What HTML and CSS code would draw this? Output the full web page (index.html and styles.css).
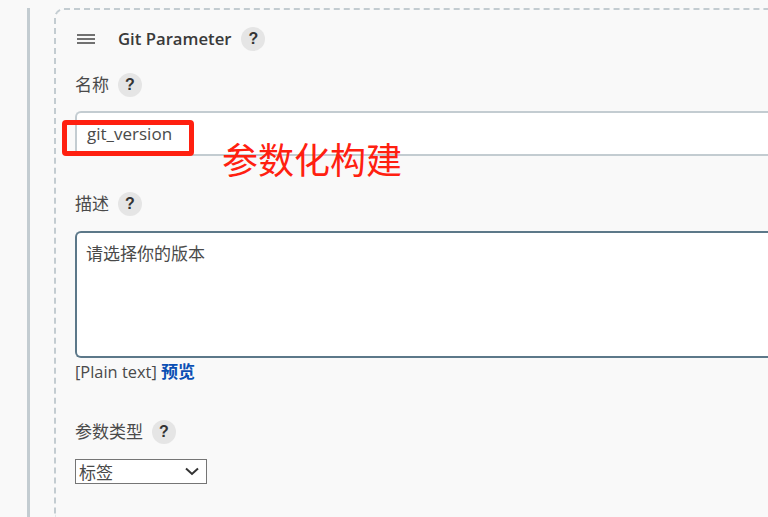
FILE: index.html
```html
<!DOCTYPE html>
<html lang="zh">
<head>
<meta charset="utf-8">
<title>Git Parameter</title>
<link rel="stylesheet" href="styles.css">
</head>
<body>
<div class="section">
  <div class="card">
    <div class="card-head">
      <svg class="handle" width="18" height="10" viewBox="0 0 18 10"><path d="M0 1h18M0 5h18M0 9h18" stroke="#444" stroke-width="1.4" fill="none"/></svg>
      <span class="card-title">Git Parameter</span>
      <span class="help">?</span>
    </div>
    <div class="label-row name-label"><span>名称</span><span class="help">?</span></div>
    <div class="text-input">git_version</div>
    <div class="label-row desc-label"><span>描述</span><span class="help">?</span></div>
    <div class="text-area">请选择你的版本</div>
    <div class="format">[Plain text] <a class="preview">预览</a></div>
    <div class="label-row type-label"><span>参数类型</span><span class="help">?</span></div>
    <div class="select">
      <span>标签</span>
      <svg width="16" height="9" viewBox="0 0 16 9"><path d="M2 1.5l6 5.5 6-5.5" stroke="#333" stroke-width="2" fill="none"/></svg>
    </div>
  </div>
</div>
<div class="highlight"></div>
<div class="annotation">参数化构建</div>
</body>
</html>
```

FILE: styles.css
```css
html, body {
  margin: 0;
  height: 100%;
  overflow: hidden;
  background: #f9f9f9;
}
body {
  font-family: "Open Sans", "Noto Sans CJK SC", sans-serif;
  font-size: 17px;
  color: #4a4a4a;
}
.section {
  box-sizing: border-box;
  height: calc(100% - 8px);
  margin: 8px 0 0 27px;
  padding-left: 24px;
  border-left: 3px solid #c3ccd1;
}
.card {
  box-sizing: border-box;
  height: 100%;
  border: 2px dashed #c3ccd1;
  border-width: 2px 0 0 2px;
  border-top-left-radius: 10px;
  padding: 16px 0 0 19px;
}
.card-head {
  display: flex;
  align-items: center;
  height: 26px;
  padding-left: 2px;
}
.handle { margin-right: 23px; }
.card-title {
  font-size: 16.7px;
  font-weight: 600;
  margin-right: 10px;
  color: #3a3a3a;
  line-height: 26px;
}
.help {
  display: inline-flex;
  align-items: center;
  justify-content: center;
  width: 24px;
  height: 24px;
  border-radius: 50%;
  background: #e5e5e5;
  font-family: "Liberation Sans", sans-serif;
  font-size: 16px;
  font-weight: 700;
  color: #333;
}
.label-row {
  display: flex;
  align-items: center;
  gap: 9px;
  height: 24px;
  line-height: 24px;
}
.name-label { margin-top: 21px; }
.text-input {
  box-sizing: border-box;
  height: 45px;
  margin-top: 14px;
  padding: 9px 0 0 10px;
  background: #fff;
  border: 2px solid #c3ccd1;
  border-right: 0;
  border-radius: 6px 0 0 6px;
  line-height: 24px;
}
.desc-label { margin-top: 36px; }
.text-area {
  box-sizing: border-box;
  height: 127px;
  margin-top: 15px;
  padding: 3px 0 0 9px;
  background: #fff;
  border: 2px solid #5c7889;
  border-right: 0;
  border-radius: 6px 0 0 6px;
  line-height: 36px;
}
.format {
  margin-top: 2px;
  font-size: 16.4px;
  line-height: 24px;
}
.preview {
  font-size: 17px;
  font-weight: 700;
  color: #0b4fb4;
}
.type-label { margin-top: 36px; }
.select {
  box-sizing: border-box;
  display: flex;
  align-items: center;
  justify-content: space-between;
  width: 132px;
  height: 25px;
  margin-top: 15px;
  padding: 0 6px 1px 3px;
  background: #fff;
  border: 1px solid #757575;
}
.highlight {
  position: absolute;
  left: 62px;
  top: 120px;
  box-sizing: border-box;
  width: 132px;
  height: 36px;
  border: 5px solid #ff2010;
  border-radius: 4px;
}
.annotation {
  position: absolute;
  left: 222px;
  top: 133px;
  font-family: "Noto Sans CJK SC", sans-serif;
  font-size: 36px;
  line-height: 50px;
  color: #ff2010;
}
```
